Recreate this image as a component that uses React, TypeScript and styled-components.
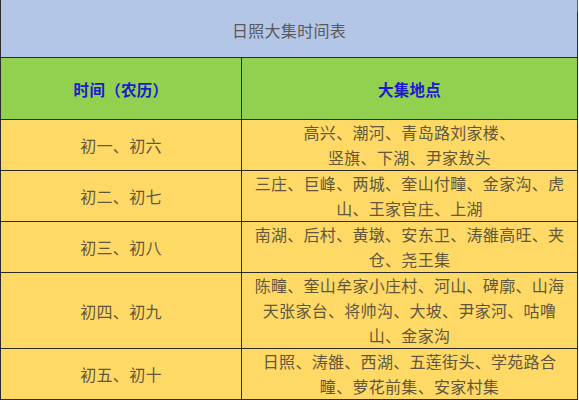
import React from 'react'
import styled, { createGlobalStyle } from 'styled-components'

const GlobalStyle = createGlobalStyle`
  html, body {
    margin: 0;
    padding: 0;
    background: #ffffff;
  }
  body {
    font-family: "Noto Sans CJK SC", "Noto Sans", sans-serif;
  }
`

interface IMarketRow {
  days: string
  places: string[]
}

const rows: IMarketRow[] = [
  { days: '初一、初六', places: ['高兴、潮河、青岛路刘家楼、', '竖旗、下湖、尹家敖头'] },
  { days: '初二、初七', places: ['三庄、巨峰、两城、奎山付疃、金家沟、虎山、王家官庄、上湖'] },
  { days: '初三、初八', places: ['南湖、后村、黄墩、安东卫、涛雒高旺、夹仓、尧王集'] },
  {
    days: '初四、初九',
    places: ['陈疃、奎山牟家小庄村、河山、碑廓、山海天张家台、将帅沟、大坡、尹家河、咕噜山、金家沟'],
  },
  { days: '初五、初十', places: ['日照、涛雒、西湖、五莲街头、学苑路合疃、萝花前集、安家村集'] },
]

const App = () => {
  return (
    <>
      <GlobalStyle />
      <Page>
        <Table>
          <colgroup>
            <col style={{ width: 241 }} />
            <col />
          </colgroup>
          <tbody>
            <tr>
              <TitleCell colSpan={2}>日照大集时间表</TitleCell>
            </tr>
            <tr>
              <HeadCell>时间（农历）</HeadCell>
              <HeadCell>大集地点</HeadCell>
            </tr>
            {rows.map(row => (
              <tr key={row.days}>
                <DayCell>{row.days}</DayCell>
                <PlaceCell>
                  {row.places.map((line, i) => (
                    <React.Fragment key={i}>
                      {i > 0 && <br />}
                      {line}
                    </React.Fragment>
                  ))}
                </PlaceCell>
              </tr>
            ))}
          </tbody>
        </Table>
        <Mark />
      </Page>
    </>
  )
}

const Page = styled.div`
  position: relative;
  width: 579px;
  height: 400px;
  overflow: hidden;
  background: #ffffff;
`

const Table = styled.table`
  width: 578px;
  margin-top: -1px;
  border-collapse: collapse;
  table-layout: fixed;
  font-size: 16px;
  letter-spacing: 0.3px;
  td {
    border: 1px solid #2b2b2b;
    text-align: center;
    vertical-align: middle;
  }
`

const TitleCell = styled.td`
  height: 55px;
  padding: 2px 0 0;
  background: #b4c6e7;
  color: #595959;
  font-size: 16px;
`

const HeadCell = styled.td`
  height: 61px;
  padding: 0;
  background: #92d050;
  color: #1a1ad0;
  font-weight: bold;
  font-size: 15.5px;
`

const DayCell = styled.td`
  padding: 0;
  background: #ffd966;
  color: #62573d;
`

const PlaceCell = styled.td`
  padding: 0 8px;
  background: #ffd966;
  color: #62573d;
  line-height: 25px;
`

const Mark = styled.div`
  position: absolute;
  top: 0;
  right: 1px;
  width: 1px;
  height: 12px;
  background: #d0304a;
`

export default App
